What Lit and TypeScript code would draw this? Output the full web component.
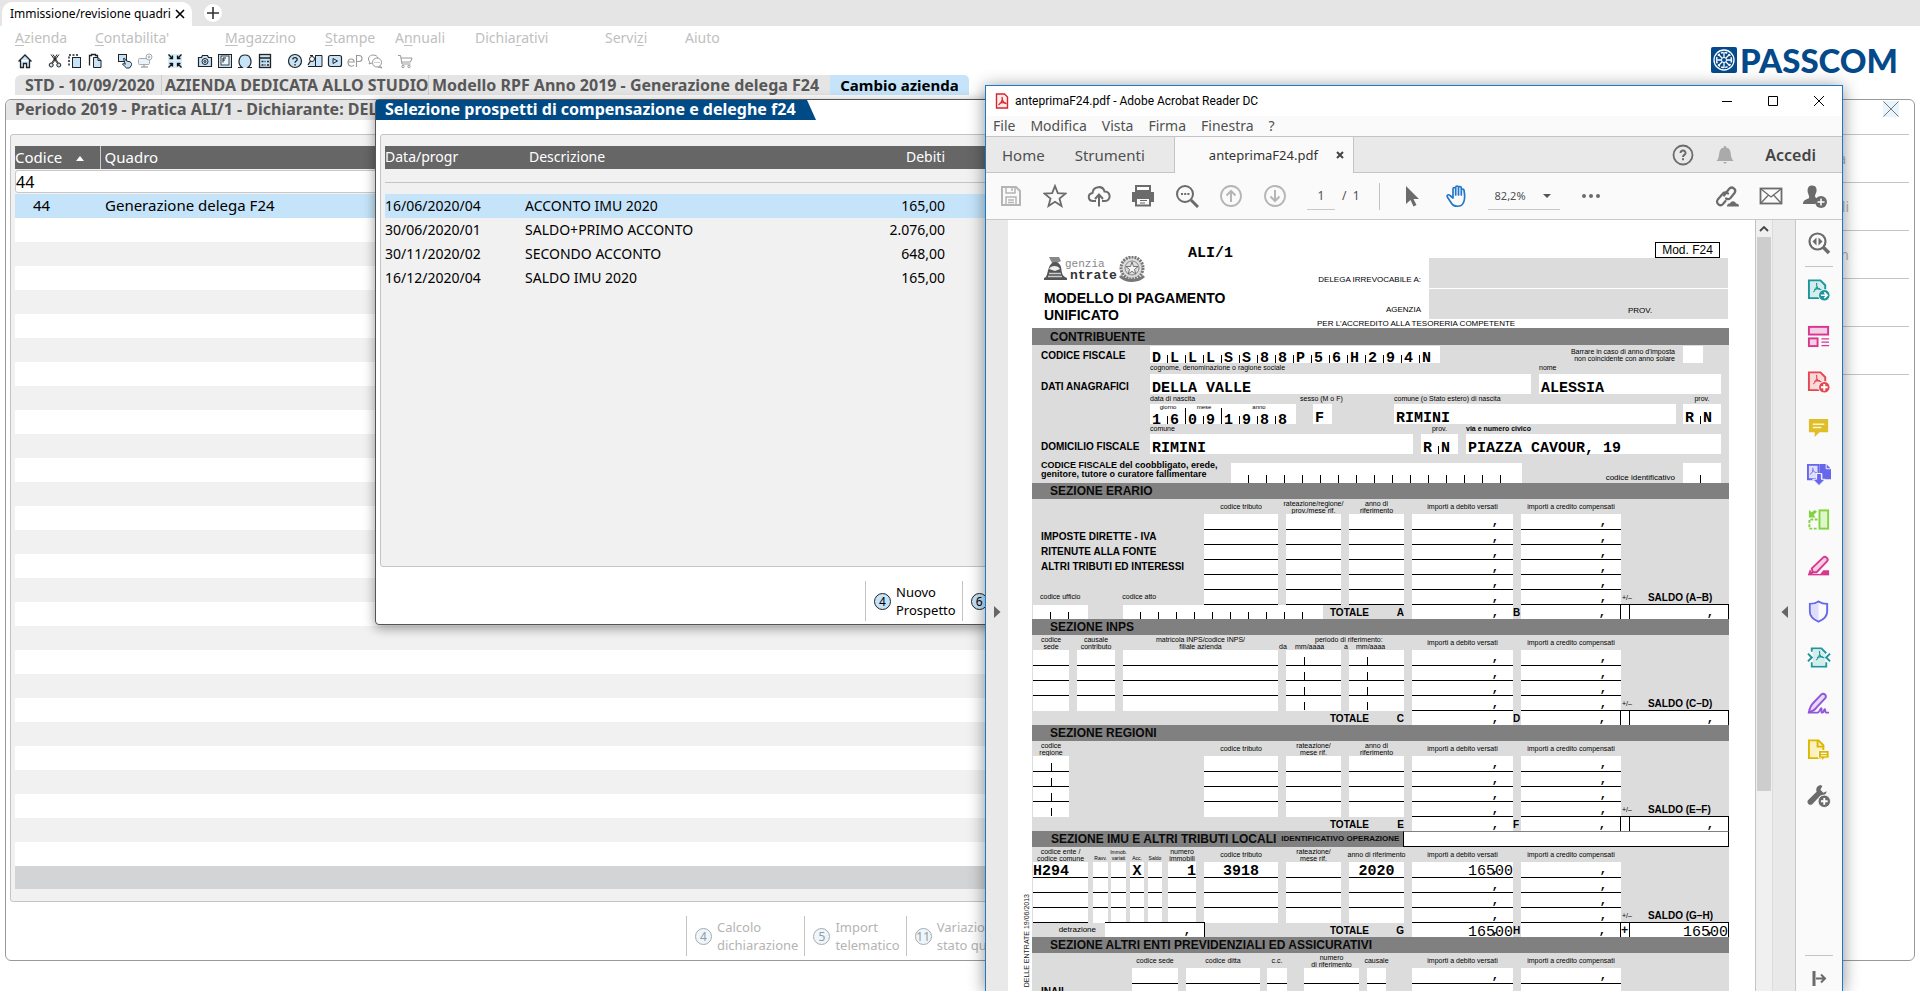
import { LitElement, html, css, svg, nothing, TemplateResult } from "lit";
import { customElement } from "lit/decorators.js";

const icon = (w: number, h: number, box: string, body: unknown) =>
  html`<svg width=${w} height=${h} viewBox=${box} fill="none" aria-hidden="true">${body}</svg>`;

const repeat = (n: number) => Array.from({ length: n }, (_, i) => i);

/* ---------- application toolbar icons, 16 x 16 ---------- */
const B = "#c5e4fa";
const appIcons: Record<string, unknown> = {
  home: svg`<path d="M1.500 8.500 8 2l6.500 6.500M3.500 7v7.500h3V10.500h3v4h3V7" stroke="#222" stroke-width="1.300" fill="${B}"/>`,
  cut: svg`<path d="M4 1.500l6.500 9M12 1.500l-6.500 9M6 1.500l5.500 9M10 1.500l-5.500 9" stroke="#222"/><circle cx="4.200" cy="12" r="2" stroke="#222" fill="${B}"/><circle cx="11.800" cy="12" r="2" stroke="#222" fill="${B}"/>`,
  copy: svg`<path d="M2 12.500V2h9" stroke="#222" stroke-width="1.500" stroke-dasharray="2 1.500"/><rect x="5.500" y="4.500" width="8" height="10" stroke="#222" fill="${B}"/>`,
  paste: svg`<path d="M2.500 12.500v-10h2v-1h4v1h2v2" stroke="#222" stroke-width="1.300"/><path d="M6.500 4.500h4.500l3 3v7H6.500z" stroke="#222" fill="${B}"/><path d="M11 4.500v3h3" stroke="#222"/>`,
  pick: svg`<rect x="1.500" y="1.500" width="8" height="7" stroke="#222" fill="${B}"/><path d="M6.500 5.500c1-.8 1.500.4 3 2.500l3.500.8c1.500.8 2 2.200 1.200 4l-1.700 2.200h-3c-1.500-1-2.500-2.500-4-4 .8-.8 1.500-.6 2.800.3z" stroke="#222" fill="${B}"/>`,
  screen: svg`<rect x="1.500" y="5.500" width="11" height="6" rx="1" stroke="#aaa" fill="#e8f3fb"/><path d="M4 14h7M7 12v2" stroke="#aaa" stroke-width="1.500"/><circle cx="12" cy="4" r="3" stroke="#aaa" fill="#fff"/><circle cx="12" cy="4" r="1" stroke="#aaa"/>`,
  shrink: svg`<rect x="1" y="1" width="14" height="14" fill="#d8edfb"/><path d="M1.500 1.500l4 4m0-3v3h-3M14.500 1.500l-4 4m0-3v3h3M1.500 14.500l4-4m0 3v-3h-3M14.500 14.500l-4-4m0 3v-3h3" stroke="#111" stroke-width="1.300"/>`,
  camera: svg`<path d="M1.500 4.500h3l1-2h5l1 2h3v9h-13z" stroke="#222" fill="${B}" stroke-width="1.200"/><circle cx="8" cy="8.500" r="3" stroke="#222"/><circle cx="8" cy="8.500" r="1" stroke="#222"/>`,
  floppy: svg`<rect x="1.500" y="1.500" width="13" height="13" stroke="#222" fill="${B}"/><rect x="4" y="3" width="8" height="9" fill="#eaf6fe" stroke="#222" stroke-width=".8"/><path d="M6 9.500V5h3M6 7h2" stroke="#222"/>`,
  omega: svg`<path d="M1 14.500h4C0 11 1.500 2 8 2s8 9 3 12.500h4" stroke="#222" fill="${B}" stroke-width="1.200"/>`,
  calc: svg`<rect x="2.500" y="1.500" width="11" height="13" stroke="#222" fill="${B}" stroke-width="1.300"/><path d="M2.500 5h11" stroke="#222" stroke-width="1.500"/><path d="M4.500 8.500h2m1 0h1m1.500 0h2M4.500 12h2m1 0h1m1.500 0h2" stroke="#222" stroke-width="1.600"/>`,
  help: svg`<circle cx="8" cy="8" r="6.500" stroke="#222" fill="${B}" stroke-width="1.200"/><path d="M5.800 6.500C5.800 3.800 10.200 4 10.200 6.500 10.200 8 8 8 8 9.800M8 11v1.500" stroke="#222" stroke-width="1.300"/>`,
  book: svg`<path d="M8.500 2.500H15v11H8.500zM1 13.500h7.500v-11M3 2.500h3" stroke="#222" fill="${B}"/><circle cx="5" cy="6" r="2.500" stroke="#222" fill="#fff"/><path d="M3.500 8 1 12" stroke="#222" stroke-width="1.400"/>`,
  video: svg`<rect x="1.500" y="2.500" width="13" height="11" rx="2" stroke="#222" fill="${B}" stroke-width="1.200"/><path d="M6 5.500v5L10.500 8z" stroke="#222"/>`,
  ep: svg`<path d="M.8 9h6.400C7.200 5 1 5 1 9.500c0 4 4.500 4.500 6 2.500M9.500 14V2.500H12c4 0 4 6 0 6H9.500" stroke="#999" stroke-width="1.100"/>`,
  chat: svg`<path d="M3 9C0 7 1.500 2 6 2c3 0 4.500 1.500 5 3" stroke="#999"/><path d="M3 9 2 11l3-1" stroke="#999"/><circle cx="10" cy="9.500" r="4.500" stroke="#999" fill="#fff"/><path d="M13 12.500l2 2.500-4-1M7.500 9.500h1m1 0h1m1 0h1" stroke="#999"/>`,
  cart: svg`<path d="M1 2.500h2.500L5 11h8.500M4 5h11l-1.500 4H5" stroke="#999" fill="none"/><circle cx="6" cy="13.500" r="1.200" stroke="#999"/><circle cx="12" cy="13.500" r="1.200" stroke="#999"/>`,
};
const toolGroups: [string, string][][] = [
  [["home", "Home"]],
  [["cut", "Taglia"], ["copy", "Copia"], ["paste", "Incolla"]],
  [["pick", "Seleziona"], ["screen", "Schermo"]],
  [["shrink", "Riduci"]],
  [["camera", "Cattura"], ["floppy", "Funzioni"], ["omega", "Simboli"], ["calc", "Calcolatrice"]],
  [["help", "Aiuto"], ["book", "Manuale"], ["video", "Video"], ["ep", "ePass"], ["chat", "Chat"]],
  [["cart", "Carrello"]],
];

/* ---------- reader icons, 24 x 24 ---------- */
const G = "#6b6b6b";
const L = "#b5b5b5";
const rd: Record<string, unknown> = {
  save: svg`<path d="M3 3h14l4 4v14H3z" stroke="${L}" stroke-width="2"/><path d="M7 3v6h9V3M7 21v-8h10v8M9 16h6M9 18.500h6M13 4v3" stroke="${L}" stroke-width="1.500"/>`,
  star: svg`<path d="M12 2l2.800 7.200 7.700.4-6 4.900 2 7.500L12 17.800 5.500 22l2-7.500-6-4.900 7.700-.4z" stroke="${G}" stroke-width="1.800"/>`,
  cloud: svg`<path d="M9 17H6C1 17 0 10 5.500 9 6 2 16 1 17.500 7.500 24 7 24.500 17 18 17h-3" stroke="${G}" stroke-width="2"/><path d="M12 22.500V11M8 15l4-4.500 4 4.500" stroke="${G}" stroke-width="2"/>`,
  print: svg`<path d="M5 2h14v5H5z" stroke="${G}" stroke-width="2"/><path d="M1 8h22v10h-3v-4H4v4H1z" fill="${G}"/><path d="M5 14h14v7.500H5z" stroke="${G}" stroke-width="2" fill="#fafafa"/><path d="M9 16.500h7M9 19h5" stroke="${G}" stroke-width="1.200"/>`,
  search: svg`<circle cx="10" cy="10" r="8" stroke="${G}" stroke-width="2"/><path d="M16 16l7 7" stroke="${G}" stroke-width="3"/><path d="M6 10h2m1.200 0h2m1.200 0h2" stroke="${G}" stroke-width="1.800"/>`,
  up: svg`<circle cx="12" cy="12" r="10" stroke="${L}" stroke-width="1.800"/><path d="M12 18V7M7.500 11.500 12 7l4.500 4.500" stroke="${L}" stroke-width="2"/>`,
  down: svg`<circle cx="12" cy="12" r="10" stroke="${L}" stroke-width="1.800"/><path d="M12 6v11M7.500 12.500 12 17l4.500-4.500" stroke="${L}" stroke-width="2"/>`,
  cursor: svg`<path d="M6 2v18l4.500-4 3 6.500 3-1.400-3-6.100H19z" fill="${G}"/>`,
  hand: svg`<path d="M7.500 14V5c0-2 2.700-2 2.700 0v6V3.500c0-2 2.800-2 2.800 0V11V4c0-2 2.800-2 2.800 0v7V6.500c0-2 2.700-2 2.700 0 1 5 1 9-.5 12-2 5-10 5-12.500 0L1.800 13c-.8-2 1.200-3 2.700-1.500z" transform="translate(1.500 0)" stroke="#2277cc" stroke-width="1.700" stroke-linejoin="round"/>`,
  dots: svg`<circle cx="5" cy="12" r="2" fill="${G}"/><circle cx="12" cy="12" r="2" fill="${G}"/><circle cx="19" cy="12" r="2" fill="${G}"/>`,
  link: svg`<g stroke="${G}" stroke-width="2.200" stroke-linecap="round"><path d="M9 11.500 14 5c3-3.500 8 .5 5.500 4l-4 5c-1.500 1.500-3 1.500-4.500.5"/><path d="M13 9.500c-1.500-1.500-4-1.500-5.500.5L2.800 15.500c-2.500 4 2.500 7.500 5.200 4.500l2.500-3"/></g><path d="M12 22.500c0-2.500 1.500-3 3-3 1-3 5-3 6 0 2 0 3 1 3 3z" fill="${G}"/>`,
  mail: svg`<rect x="1.500" y="4.500" width="21" height="15" stroke="${G}" stroke-width="1.800"/><path d="M2 5l10 8 10-8M2 19l7.500-8M22 19l-7.500-8" stroke="${G}" stroke-width="1.300"/>`,
  user: svg`<path d="M9 1.500c4 0 5 3 4.500 6-.4 2-1.500 3-1.500 4.500 0 2 2 2 3.500 3L12 20H0c0-5 5-4.500 6-6 .8-1.500-1-4-1.300-6C4.300 4 5.500 1.500 9 1.500z" fill="${G}"/><circle cx="18" cy="18" r="6" fill="${G}"/><path d="M14.500 18h7M18 14.500v7" stroke="#fff" stroke-width="1.500"/>`,
};

const acro = (x: number, c: string) => svg`<path d="M${x} 5c1 4-2 9-3.500 9.500M${x} 8c1 3 2 4.500 5 4M${x - 2.5} 12c2-1 4-1 6-1" stroke="${c}" stroke-width="1.200"/>`;
const docShape = (c: string, f: string) => svg`<path d="M2 2.500h12l5 5V21H2z" stroke="${c}" stroke-width="2" fill="${f}"/>${acro(10, c)}`;
const side: [string, unknown][] = [
  ["Esporta PDF", svg`${docShape("#1c959b", "#d3ecec")}<circle cx="18" cy="18" r="6" fill="#1c959b" stroke="#fafafa"/><path d="M14.500 18h6M18 15l3 3-3 3" stroke="#fff" stroke-width="1.600"/>`],
  ["Organizza pagine", svg`<rect x="2" y="3" width="20" height="8" stroke="#d83790" stroke-width="2" fill="#f5cfe4"/><rect x="2" y="15" width="9" height="8" stroke="#d83790" stroke-width="2" fill="#f5cfe4"/><path d="M15 15.500h8M15 19h8M15 22.500h8" stroke="#d83790" stroke-width="1.300"/>`],
  ["Crea PDF", svg`${docShape("#e34850", "#fbd9db")}<circle cx="18" cy="18" r="6" fill="#e34850" stroke="#fafafa"/><path d="M14.500 18h7M18 14.500v7" stroke="#fff" stroke-width="2"/>`],
  ["Commenta", svg`<path d="M2 3h20v14h-9l-5 5v-5H2z" fill="#dfbe27"/><path d="M6 8.500h12M6 12h9" stroke="#fff6d0" stroke-width="1.600"/>`],
  ["Combina file", svg`<path d="M1 3h11v15H1z" stroke="#6767ec" stroke-width="2" fill="#dedefb"/><path d="M13 2h7l5 5v11h-9v-6h-3z" fill="#6767ec"/><path d="M20 2v5h5" stroke="#fafafa"/><path d="M6 6c1 3-1 6-3 7M6 8c1 2 2 3 4 3" stroke="#6767ec"/><path d="M10 12h5v6h4l-6.500 6.500L6 18h4z" fill="#6767ec" stroke="#fafafa"/>`],
  ["Proteggi pagine", svg`<rect x="13" y="2.500" width="9" height="19" stroke="#83d341" stroke-width="2" fill="#dff5cc"/><path d="M11 12H2.500v9.500H11" stroke="#83d341" stroke-width="2" stroke-dasharray="3 1.500"/><path d="M2 2v8h7L7 7l3.500-3L8 2 5 4.500z" fill="#83d341"/>`],
  ["Redigi", svg`<path d="M5 15 17 3.500c2-2 6 1.500 4 4L10 19H6z" stroke="#d83790" stroke-width="2" fill="#f5cfe4"/><path d="M3 16 1 22h6zM13 22l4-5h6v5z" fill="#d83790"/><path d="M1 21.500h22" stroke="#d83790" stroke-width="1.500"/>`],
  ["Proteggi", svg`<path d="M12 1.500c3 2 6 2.500 9 2.500v8c0 5-4 8.500-9 10.500C7 20.500 3 17 3 12V4c3 0 6-.5 9-2.500z" stroke="#6767ec" stroke-width="2"/><path d="M12 3v18c-4-2-8-5-8-9V5c3 0 5-.5 8-2z" fill="#dedefb"/>`],
  ["Ottimizza PDF", svg`<path d="M5 6V2.500h10l5 5M20 17v4.500H5V17" stroke="#1c959b" stroke-width="2"/><path d="M6 4h8l5 5v11H6z" fill="#d3ecec"/>${acro(13, "#1c959b")}<path d="M1 8l4 4-4 4M24 8l-4 4 4 4" stroke="#1c959b" stroke-width="2"/>`],
  ["Compila e firma", svg`<path d="M2 21c1-5 2-7 4-9L15 2.500c2.500-2 6 1 4 4L10 16c-2 3-4 4-8 5z" stroke="#9256d9" stroke-width="2" fill="#e7d9f8"/><path d="M1 21.500h10c2 0 3-5 4-4.500s-1 5 1 4.500 1.500-3.500 2.500-3.500 0 3.500 1.500 3.500h3" stroke="#9256d9" stroke-width="2"/>`],
  ["Invia per commenti", svg`<path d="M2 2.500h10l5 5V21H2z" stroke="#dbb800" stroke-width="2" fill="#faf0c0"/><path d="M11 2v7h7" stroke="#dbb800" stroke-width="2"/><path d="M12 13h11v8h-5l-3 3v-3h-3z" fill="#dbb800" stroke="#fafafa"/><path d="M14.500 16h6M14.500 18.500h6" stroke="#fff" stroke-width="1.200"/>`],
  ["Altri strumenti", svg`<path d="M14 1c-4 1-5 4-4 7L1 17c-2 3 2 6 4.500 4L14 12c3 1 6-1 6.500-4.500L17 9l-3-3 2-4z" fill="${G}"/><circle cx="18" cy="18" r="6.500" fill="${G}" stroke="#fafafa"/><path d="M14.500 18h7M18 14.500v7" stroke="#fff" stroke-width="2"/>`],
];

/* ---------- data ---------- */
const deleghe = [
  ["16/06/2020/04", "ACCONTO IMU 2020", "165,00"],
  ["30/06/2020/01", "SALDO+PRIMO ACCONTO", "2.076,00"],
  ["30/11/2020/02", "SECONDO ACCONTO", "648,00"],
  ["16/12/2020/04", "SALDO IMU 2020", "165,00"],
];

/* ============================ F24 form ============================ */
@customElement("f24-form")
export class F24Form extends LitElement {
  static styles = css`
    :host { display: block; width: 697px; color: #000; font: 8px/9px "Liberation Sans", Arial, sans-serif; }
    * { box-sizing: border-box; }
    h1, h2, p { margin: 0; }
    .head { display: flex; height: 99px; padding: 0 1px 0 12px; }
    .brand { flex: 1; white-space: nowrap; }
    .brand-top { display: flex; height: 63px; align-items: flex-end; gap: 43px; }
    .brand-top svg { flex: none; }
    .ref { align-self: flex-end; margin-bottom: 19px; }
    .mono { font: bold 15px/20px "Liberation Mono", "Courier New", monospace; white-space: pre; }
    h1 { font-size: 14px; line-height: 17px; margin-top: 7px; }
    .agencies { width: 120px; padding: 55px 8px 0 0; text-align: right; display: flex; flex-direction: column; gap: 21px; white-space: nowrap; }
    .shade { width: 299px; padding-top: 22px; display: flex; flex-direction: column; }
    .mod { align-self: flex-end; margin: 0 8px 0 0; width: 65px; height: 16px; border: 1px solid #000; background: #fff; font-size: 12px; line-height: 14px; text-align: center; }
    .shade i { display: block; height: 30px; background: #dcdcdc; margin-bottom: 1px; font-style: normal; flex: none; padding: 17px 0 0 199px; }
    .credit { height: 9px; padding-left: 285px; white-space: nowrap; }
    h2 { height: 16px; background: #808080; padding-left: 18px; font-size: 12px; line-height: 16px; color: #0a0a0a; white-space: nowrap; }
    .tall { height: 17px; line-height: 18px; }
    .body { background: #dcdcdc; }
    .payer { padding: 1px 8px 0 9px; height: 138px; font-size: 7px; line-height: 10px; }
    .payer b.l { font-size: 10px; line-height: 25px; }
    .r1 { display: flex; height: 17px; }
    .payer .r1 b.l { width: 109px; line-height: 20px; }
    .comb { display: flex; background: #fff; }
    .comb span { width: 18px; padding-left: 2px; background: linear-gradient(#000, #000) right bottom / 1px 8px no-repeat; font: bold 15px/25px "Liberation Mono", monospace; height: 100%; flex: none; }
    .comb span:last-child { background: none; }
    .comb span.full { background-size: 1px 100%; }
    .boxed span { line-height: 30px; }
    .cf { width: 290px; }
    .note { margin-left: auto; width: 110px; text-align: right; line-height: 7px; padding-top: 2px; white-space: nowrap; }
    .tick { width: 20px; margin: 0 18px 0 8px; background: #fff; }
    .r2, .r3, .r4 { display: grid; grid-template-rows: 10px 20px; }
    .r2 { grid-template-columns: 109px 381px 8px 182px; grid-template-rows: 11px 20px; }
    .r3 { grid-template-columns: 109px 146px 4px 13px 19px 62px 282px 7px 38px; }
    .r4 { grid-template-columns: 109px 263px 8px 37px 8px 255px; }
    .l { grid-row: 2; grid-column: 1; white-space: nowrap; }
    .cap { grid-row: 1; white-space: nowrap; }
    .val { grid-row: 2; background: #fff; padding-left: 2px; line-height: 30px; }
    .boxed { grid-row: 2; }
    .k2 { grid-column: 2; } .k4 { grid-column: 4; } .k5 { grid-column: 5; } .k6 { grid-column: 6; } .k7 { grid-column: 7; } .k9 { grid-column: 9; }
    .sx { grid-column: 4 / 7; }
    .mid { text-align: center; }
    .date { grid-row: 2; grid-column: 2; background: #fff; display: grid; grid-template-columns: 36px 36px 1fr; grid-template-rows: 4px 16px; font-size: 6px; line-height: 6px; text-align: center; }
    .date .comb { grid-column: 1 / 4; background: none; text-align: left; }
    .date .comb span { line-height: 25px; }
    .r5 { display: flex; height: 29px; padding-top: 9px; }
    .r5 b { width: 190px; font-size: 9px; line-height: 9px; margin-top: -2px; white-space: nowrap; }
    .r5 .ident { margin-left: auto; font-size: 8px; line-height: 30px; padding-right: 8px; }
    .c16 { width: 291px; } .c2 { width: 38px; }

    .sec { display: grid; grid-template-columns: 1px 36px 8px 38px 8px 81px 74px 8px 55px 8px 55px 8px 101px 8px 100px 9px 1fr; grid-template-rows: 15px auto 14px; }
    .h { grid-row: 1; align-self: center; justify-self: center; text-align: center; font-size: 7px; line-height: 7px; white-space: nowrap; }
    .stack { grid-row: 2; display: flex; flex-direction: column; }
    .cell { height: 15px; background: #fff; border-bottom: 1px solid #000; display: grid; font: bold 12px/18px "Liberation Mono", monospace; }
    .cell:first-child { height: 16px; }
    .open .cell:last-child { border-bottom-color: #fff; }
    .cell > * { grid-area: 1 / 1; }
    .comma { justify-self: end; padding-right: 14px; line-height: 16px; }
    .num { justify-self: end; line-height: 19px; font-weight: normal; }
    .v { line-height: 19px; justify-self: center; }
    .v.start { justify-self: start; } .v.end { justify-self: end; }
    .notch .cell { background: linear-gradient(#000, #000) 18px bottom / 1px 8px no-repeat #fff; }
    .a { grid-column: 2; } .b { grid-column: 4; } .c { grid-column: 6 / 8; } .d { grid-column: 7; } .e { grid-column: 9; } .f { grid-column: 11; } .g { grid-column: 13; } .i { grid-column: 15; } .j { grid-column: 17; }
    .tword { grid-row: 3; grid-column: 8 / 12; justify-self: end; margin-right: 35px; font: bold 10px/15px "Liberation Sans", sans-serif; }
    .tletter { grid-row: 3; grid-column: 11; justify-self: end; font: bold 10px/15px "Liberation Sans", sans-serif; }
    .tb { grid-row: 3; grid-column: 14; font: bold 10px/15px "Liberation Sans", sans-serif; }
    .sum { grid-row: 3; background: #fff; display: grid; font: bold 12px/16px "Liberation Mono", monospace; }
    .sum > * { grid-area: 1 / 1; }
    .sum.g, .sum.i { box-shadow: 0 -1px #000; }
    .sum.i { border-right: 1px solid #000; }
    .sign { grid-row: 3; grid-column: 16; background: #fff; border-right: 1px solid #000; font: bold 12px/16px "Liberation Mono", monospace; box-shadow: 0 -1px #000; }
    .sum.j { border-right: 1px solid #000; box-shadow: 0 -1px #000; }
    .saldo { grid-row: 2; grid-column: 16 / 18; align-self: end; display: flex; gap: 16px; font-size: 7px; line-height: 14px; padding-left: 1px; }
    .saldo b { font-size: 10px; white-space: nowrap; }
    .names { grid-row: 2; grid-column: 2 / 7; padding: 15px 0 0 8px; font: bold 10px/15px "Liberation Sans", sans-serif; white-space: nowrap; }
    .codes { grid-row: 2; grid-column: 2 / 7; align-self: end; display: flex; gap: 42px; padding: 0 0 4px 7px; line-height: 9px; font-size: 7px; }
    .tail { grid-row: 3; grid-column: 2 / 10; display: flex; gap: 35px; }
    .tail .comb span { background-size: 1px 7px; }
    .u3 { width: 55px; } .u11 { width: 200px; }
    .period { grid-column: 8 / 12; justify-self: start; text-align: left; padding-left: 1px; }
    .period span { display: block; padding-left: 36px; }
    .period i { font-style: normal; }
    .period div { display: grid; grid-template-columns: 16px 49px 12px 1fr; }
    .imu { grid-row: 1 / 3; grid-column: 2 / 7; display: grid; grid-template-rows: 15px auto; grid-template-columns: 55px 5px 15px 3px 15px 4px 14px 4px 14px 6px 28px; }
    .tiny { font-size: 5px; line-height: 6px; align-self: end; padding-bottom: 1px; }
    .k1 { grid-column: 1; } .k3 { grid-column: 3; } .k11 { grid-column: 11; }
    .det { grid-row: 3; grid-column: 2 / 8; display: flex; font-size: 8px; line-height: 14px; }
    .det span { width: 72px; text-align: right; padding-right: 9px; }
    .det div { width: 100px; background: #fff; border-right: 1px solid #000; box-shadow: 0 -1px #000; text-align: right; padding-right: 13px; font: bold 12px/16px "Liberation Mono", monospace; }
    .opbar { display: flex; align-items: center; padding-left: 19px; }
    .opbar small { font-size: 8px; margin-left: 5px; }
    .opbar em { width: 326px; margin-left: auto; align-self: stretch; background: #fff; border: 1px solid #000; border-top-color: #808080; }
    .inail { grid-row: 1 / 3; grid-column: 2 / 12; display: grid; grid-template-rows: 15px auto; grid-template-columns: 99px 46px 8px 74px 7px 20px 17px 55px 8px 19px; }
    .k8 { grid-column: 8; } .k10 { grid-column: 10; }
    .inail b { grid-row: 2; grid-column: 1; font: bold 10px/12px "Liberation Sans", sans-serif; padding: 18px 0 0 8px; }
  `;

  private cells(n: number, col: string, opts: { comma?: boolean; first?: unknown; open?: boolean; notch?: boolean } = {}) {
    return html`<div class="stack ${col} ${opts.open ? "open" : ""} ${opts.notch ? "notch" : ""}">
      ${repeat(n).map((i) => html`<div class="cell">${opts.comma ? html`<span class="comma">,</span>` : nothing}${i === 0 && opts.first ? opts.first : nothing}</div>`)}
    </div>`;
  }

  private comb(text: string, n: number, cls = "") {
    return html`<div class="comb ${cls}">${repeat(n).map((i) => html`<span>${text[i] ?? ""}</span>`)}</div>`;
  }

  private amounts(n: number, debit?: string) {
    const m = debit ? html`<span class="mono num">${debit}</span>` : nothing;
    return html`
      <span class="h g">importi a debito versati</span><span class="h i">importi a credito compensati</span>
      ${this.cells(n, "g", { comma: true, first: m })}${this.cells(n, "i", { comma: true })}`;
  }

  private totals(a: string, b: string, value?: string) {
    const m = value ? html`<span class="mono num">${value}</span>` : nothing;
    return html`
      <span class="tword">TOTALE</span><span class="tletter">${a}</span>
      <div class="sum g"><span class="comma">,</span>${m}</div>
      <span class="tb">${b}</span>
      <div class="sum i"><span class="comma">,</span></div>
      <div class="sign">${value ? "+" : ""}</div>
      <div class="sum j"><span class="comma">,</span>${m}</div>
      <div class="saldo"><span>+/–</span><b>SALDO (${a}–${b})</b></div>`;
  }

  render() {
    return html`
      <div class="head">
        <div class="brand">
          <div class="brand-top">
            <svg width="101" height="27" viewBox="0 0 101 27" role="img" aria-label="Agenzia Entrate">
              <path d="M5 1h10l2 4-4 2H8z" fill="#888" />
              <path d="M0 22c4 0 3-10 7-14s9-1 10 3 0 9 6 11v2H0z" fill="#555" />
              <path d="M5 13c2-4 9-4 11 0l-5 2z" fill="#eee" />
              <path d="M5 17.500h12M4 20.500h14" stroke="#ccc" stroke-width="1.500" />
              <text x="21" y="11" font-family="Liberation Mono" font-size="11" fill="#888">genzia</text>
              <text x="26" y="23" font-family="Liberation Mono" font-size="13" font-weight="bold" fill="#333">ntrate</text>
              <circle cx="88" cy="12" r="11" fill="#ddd" stroke="#777" stroke-width="3" stroke-dasharray="2 1" />
              <circle cx="88" cy="12" r="7" fill="none" stroke="#888" />
              <path d="M88 6l1.500 4.500H94l-3.500 3 1.300 4.500-3.800-2.700-3.800 2.700 1.300-4.500-3.500-3h4.500z" fill="#f4f4f4" stroke="#555" stroke-width=".8" />
              <path d="M76 20c6 6 18 6 24 0" fill="none" stroke="#777" stroke-width="3" />
            </svg>
            <span class="mono ref">ALI/1</span>
          </div>
          <h1>MODELLO DI PAGAMENTO<br />UNIFICATO</h1>
        </div>
        <div class="agencies"><span>DELEGA IRREVOCABILE A:</span><span>AGENZIA</span></div>
        <div class="shade"><span class="mod">Mod. F24</span><i></i><i>PROV.</i></div>
      </div>
      <p class="credit">PER L'ACCREDITO ALLA TESORERIA COMPETENTE</p>

      <h2 class="tall">CONTRIBUENTE</h2>
      <div class="body payer">
        <div class="r1">
          <b class="l">CODICE FISCALE</b>${this.comb("DLLLSS88P56H294N", 16, "cf")}
          <span class="note">Barrare in caso di anno d'imposta<br />non coincidente con anno solare</span><i class="tick"></i>
        </div>
        <div class="r2">
          <b class="l">DATI ANAGRAFICI</b>
          <span class="cap k2">cognome, denominazione o ragione sociale</span><span class="cap k4">nome</span>
          <span class="val mono k2">DELLA VALLE</span><span class="val mono k4">ALESSIA</span>
        </div>
        <div class="r3">
          <span class="cap k2">data di nascita</span><span class="cap sx">sesso (M o F)</span>
          <span class="cap k7">comune (o Stato estero) di nascita</span><span class="cap k9 mid">prov.</span>
          <div class="date">
            <span>giorno</span><span>mese</span><span>anno</span>
            <div class="comb">${"16091988".split("").map((c, i) => html`<span class=${i === 1 || i === 3 ? "full" : ""}>${c}</span>`)}</div>
          </div>
          <span class="val mono k5">F</span><span class="val mono k7">RIMINI</span>${this.comb("RN", 2, "boxed k9")}
        </div>
        <div class="r4">
          <b class="l">DOMICILIO FISCALE</b>
          <span class="cap k2">comune</span><span class="cap k4 mid">prov.</span><b class="cap k6">via e numero civico</b>
          <span class="val mono k2">RIMINI</span>${this.comb("RN", 2, "boxed k4")}<span class="val mono k6">PIAZZA CAVOUR, 19</span>
        </div>
        <div class="r5">
          <b>CODICE FISCALE del coobbligato, erede,<br />genitore, tutore o curatore fallimentare</b>
          ${this.comb("", 16, "c16")}<span class="ident">codice identificativo</span>${this.comb("", 2, "c2")}
        </div>
      </div>

      <h2>SEZIONE ERARIO</h2>
      <div class="body sec">
        <span class="h d">codice tributo</span><span class="h e">rateazione/regione/<br />prov./mese rif.</span><span class="h f">anno di<br />riferimento</span>
        <div class="names">IMPOSTE DIRETTE - IVA<br />RITENUTE ALLA FONTE<br />ALTRI TRIBUTI ED INTERESSI</div>
        <div class="codes"><span>codice ufficio</span><span>codice atto</span></div>
        ${this.cells(6, "d")}${this.cells(6, "e")}${this.cells(6, "f")}${this.amounts(6)}
        <div class="tail">${this.comb("", 3, "u3")}${this.comb("", 11, "u11")}</div>
        ${this.totals("A", "B")}
      </div>

      <h2>SEZIONE INPS</h2>
      <div class="body sec">
        <span class="h a">codice<br />sede</span><span class="h b">causale<br />contributo</span>
        <span class="h c">matricola INPS/codice INPS/<br />filiale azienda</span>
        <div class="h period"><span>periodo di riferimento:</span><div><i>da</i><i>mm/aaaa</i><i>a</i><i>mm/aaaa</i></div></div>
        ${this.cells(4, "a", { open: true })}${this.cells(4, "b", { open: true })}${this.cells(4, "c", { open: true })}
        ${this.cells(4, "e", { open: true, notch: true })}${this.cells(4, "f", { open: true, notch: true })}${this.amounts(4)}
        ${this.totals("C", "D")}
      </div>

      <h2>SEZIONE REGIONI</h2>
      <div class="body sec">
        <span class="h a">codice<br />regione</span><span class="h d">codice tributo</span>
        <span class="h e">rateazione/<br />mese rif.</span><span class="h f">anno di<br />riferimento</span>
        ${this.cells(4, "a", { open: true, notch: true })}${this.cells(4, "d", { open: true })}${this.cells(4, "e", { open: true })}${this.cells(4, "f", { open: true })}
        ${this.amounts(4)}${this.totals("E", "F")}
      </div>

      <h2 class="opbar">SEZIONE IMU E ALTRI TRIBUTI LOCALI<small>IDENTIFICATIVO OPERAZIONE</small><em></em></h2>
      <div class="body sec">
        <div class="imu">
          <span class="h k1">codice ente /<br />codice comune</span><span class="h k3 tiny">Ravv.</span><span class="h k5 tiny">Immob.<br />variati</span>
          <span class="h k7 tiny">Acc.</span><span class="h k9 tiny">Saldo</span><span class="h k11">numero<br />immobili</span>
          ${this.cells(4, "k1", { first: html`<span class="mono v start">H294</span>` })}
          ${this.cells(4, "k3", { open: true })}${this.cells(4, "k5", { open: true })}
          ${this.cells(4, "k7", { open: true, first: html`<span class="mono v">X</span>` })}
          ${this.cells(4, "k9", { open: true })}
          ${this.cells(4, "k11", { open: true, first: html`<span class="mono v end">1</span>` })}
        </div>
        <span class="h d">codice tributo</span><span class="h e">rateazione/<br />mese rif.</span><span class="h f">anno di riferimento</span>
        ${this.cells(4, "d", { open: true, first: html`<span class="mono v">3918</span>` })}${this.cells(4, "e", { open: true })}
        ${this.cells(4, "f", { open: true, first: html`<span class="mono v">2020</span>` })}
        ${this.amounts(4, "16500")}
        <div class="det"><span>detrazione</span><div>,</div></div>
        ${this.totals("G", "H", "16500")}
      </div>

      <h2>SEZIONE ALTRI ENTI PREVIDENZIALI ED ASSICURATIVI</h2>
      <div class="body sec">
        <div class="inail">
          <span class="h k2">codice sede</span><span class="h k4">codice ditta</span><span class="h k6">c.c.</span>
          <span class="h k8">numero<br />di riferimento</span><span class="h k10">causale</span>
          <b>INAIL</b>
          ${this.cells(3, "k2")}${this.cells(3, "k4")}${this.cells(3, "k6")}${this.cells(3, "k8")}${this.cells(3, "k10")}
        </div>
        ${this.amounts(3)}
      </div>
    `;
  }
}

/* ======================= PDF reader window ======================= */
@customElement("pdf-reader")
export class PdfReader extends LitElement {
  static styles = css`
    :host { display: flex; flex-direction: column; box-sizing: border-box; border: 1px solid #1979ca; border-bottom: 0; background: #fafafa; box-shadow: 0 2px 16px rgba(0, 0, 0, 0.45); overflow: hidden; font: 14px/20px "Noto Sans", "Open Sans", sans-serif; color: #505050; }
    * { box-sizing: border-box; }
    button { border: 0; background: none; padding: 0; font: inherit; color: inherit; display: flex; align-items: center; justify-content: center; }
    .title { height: 30px; flex: none; display: flex; align-items: center; background: #fff; padding-left: 9px; color: #000; font: 12px/16px Roboto, "Open Sans", sans-serif; }
    .title svg { flex: none; }
    .title h1 { margin: 0 auto 0 6px; font: inherit; }
    .title button { width: 46px; height: 30px; }
    .menu { height: 21px; flex: none; display: flex; gap: 15px; padding-left: 7px; border-bottom: 1px solid #c4c4c4; }
    .tabs { height: 36px; flex: none; display: flex; background: #e9e9e9; border-bottom: 1px solid #c4c4c4; font-size: 15px; align-items: stretch; }
    .tabs .home { padding: 0 16px; }
    .tabs .tools { padding: 0 29px 0 14px; }
    .tabs .open { margin-bottom: -1px; height: 36px; width: 180px; background: #fafafa; border: solid #c4c4c4; border-width: 0 1px; font-size: 13px; color: #333; padding: 0 7px 0 34px; display: flex; align-items: center; justify-content: space-between; }
    .open button { width: 12px; }
    .grow { flex: 1; }
    .tabs .ic { width: 42px; }
    .tabs .sign { font-weight: 600; font-size: 16px; color: #444; padding: 0 26px 0 19px; }
    .bar { height: 47px; flex: none; display: flex; align-items: center; padding: 0 5px 0 3px; border-bottom: 1px solid #c8c8c8; }
    .bar button { width: 44px; height: 44px; flex: none; }
    .page-no { width: 28px; margin-left: 10px; border: 0; border-bottom: 1px solid #c8c8c8; background: none; height: 27px; padding: 0; text-align: center; font: 12px "Noto Sans", sans-serif; color: #505050; border-radius: 0; }
    .of { font-size: 12px; margin: 0 19px 0 7px; white-space: nowrap; }
    .rule { width: 1px; height: 27px; background: #c4c4c4; margin-right: 10px; }
    .zoom { display: flex; align-items: center; width: 72px; height: 27px; border-bottom: 1px solid #c8c8c8; margin: 0 9px 0 10px; }
    .zoom select { appearance: none; border: 0; background: none; font: 11px "Noto Sans", sans-serif; color: #505050; padding: 0; margin-left: 7px; width: 48px; }
    .view { flex: 1; min-height: 0; display: flex; }
    .rail { width: 22px; flex: none; background: #e9e9e9; display: flex; align-items: center; justify-content: center; height: 784px; }
    .page { flex: 1; min-width: 0; background: #fff; display: flex; overflow: hidden; align-items: flex-start; }
    .edge { writing-mode: vertical-rl; transform: rotate(180deg); width: 24px; padding-right: 15px; margin-top: 674px; font: 7px/8px "Liberation Sans", sans-serif; color: #222; white-space: nowrap; }
    .scroll { width: 18px; flex: none; border-left: 1px solid #c4c4c4; border-right: 1px solid #dcdcdc; background: #f0f0f0; display: flex; flex-direction: column; padding: 0 1px; }
    .scroll button { height: 17px; }
    .thumb { height: 554px; background: #cdcdcd; }
    .strip { border-right: 1px solid #c8c8c8; }
    .dock { width: 46px; flex: none; display: flex; flex-direction: column; align-items: center; padding-bottom: 1px; }
    .dock button { width: 46px; height: 46px; flex: none; }
    .dock hr { width: 28px; border: 0; border-top: 1px solid #c4c4c4; margin: 0; flex: none; }
    .dock .last { height: 34px; padding-top: 14px; }
    .full { background: #e9e9e9; display: flex; }
  `;

  private tool(name: string, label: string) {
    return html`<button aria-label=${label}>${icon(24, 24, "0 0 24 24", rd[name])}</button>`;
  }

  render(): TemplateResult {
    return html`
      <div class="title">
        ${icon(14, 16, "0 0 14 16", svg`<path d="M1.500 1h8l3 3v11h-11z" stroke="#d9232a" stroke-width="1.400" fill="#fdeeee"/><path d="M7 4c1 3-1 6-3.500 8M7 6c1 3 2 4.500 4.500 4.500M4.500 10.500c2-1 4-1 6-.5" stroke="#d9232a" stroke-width="1.300"/>`)}
        <h1>anteprimaF24.pdf - Adobe Acrobat Reader DC</h1>
        <button aria-label="Riduci a icona">${icon(12, 12, "0 0 12 12", svg`<path d="M1 6.500h10" stroke="#000"/>`)}</button>
        <button aria-label="Ingrandisci">${icon(12, 12, "0 0 12 12", svg`<path d="M1.500 1.500h9v9h-9z" stroke="#000"/>`)}</button>
        <button aria-label="Chiudi">${icon(12, 12, "0 0 12 12", svg`<path d="M1 1l10 10M11 1 1 11" stroke="#000"/>`)}</button>
      </div>
      <nav class="menu">${["File", "Modifica", "Vista", "Firma", "Finestra", "?"].map((t) => html`<button>${t}</button>`)}</nav>
      <div class="tabs">
        <button class="home">Home</button><button class="tools">Strumenti</button>
        <div class="open"><span>anteprimaF24.pdf</span><button aria-label="Chiudi scheda">${icon(8, 8, "0 0 8 8", svg`<path d="M1 1l6 6M7 1 1 7" stroke="#444" stroke-width="2"/>`)}</button></div>
        <span class="grow"></span>
        <button class="ic" aria-label="Guida">${icon(22, 22, "0 0 22 22", svg`<circle cx="11" cy="11" r="9.500" stroke="${G}" stroke-width="1.800"/><path d="M8.500 9c0-3.500 5.500-3 5 .3-.3 1.700-2.500 1.500-2.500 3.700M11 14.300v2" stroke="${G}" stroke-width="2"/>`)}</button>
        <button class="ic" aria-label="Notifiche">${icon(20, 20, "0 0 20 20", svg`<path d="M9 1h2v1.500c6 1 4 7 6 11.500l1.500 2h-17L3 14C5 9.500 3 3.500 9 2.500zM8 17h4l-2 2z" fill="#aaa"/>`)}</button>
        <button class="sign">Accedi</button>
      </div>
      <div class="bar">
        ${this.tool("save", "Salva")}${this.tool("star", "Preferiti")}${this.tool("cloud", "Carica")}${this.tool("print", "Stampa")}${this.tool("search", "Trova")}${this.tool("up", "Pagina precedente")}${this.tool("down", "Pagina successiva")}
        <input class="page-no" aria-label="Pagina" value="1" /><span class="of">/&nbsp; 1</span><span class="rule"></span>
        ${this.tool("cursor", "Selezione")}${this.tool("hand", "Mano")}
        <label class="zoom"><select aria-label="Zoom"><option>82,2%</option></select>${icon(8, 6, "0 0 8 6", svg`<path d="M0 1h8L4 5z" fill="#555"/>`)}</label>
        ${this.tool("dots", "Altro")}
        <span class="grow"></span>
        ${this.tool("link", "Condividi collegamento")}${this.tool("mail", "Posta")}${this.tool("user", "Condividi")}
      </div>
      <div class="view">
        <div class="full"><button class="rail" aria-label="Apri riquadro">${icon(7, 12, "0 0 7 12", svg`<path d="M0 0v12l6.500-6z" fill="#666"/>`)}</button></div>
        <div class="page"><span class="edge">DELLE ENTRATE 19/06/2013</span><f24-form></f24-form></div>
        <div class="scroll"><button aria-label="Su">${icon(10, 6, "0 0 10 6", svg`<path d="M1 5l4-4 4 4" stroke="#444" stroke-width="1.800"/>`)}</button><div class="thumb"></div></div>
        <div class="full strip"><button class="rail" aria-label="Chiudi riquadro">${icon(7, 12, "0 0 7 12", svg`<path d="M7 0v12L.5 6z" fill="#666"/>`)}</button></div>
        <div class="dock">
          <button aria-label="Cerca strumenti">${icon(24, 24, "0 0 24 24", svg`<circle cx="10.500" cy="10.500" r="8" stroke="${G}" stroke-width="2.200"/><path d="M16 16l6 6" stroke="${G}" stroke-width="3.500"/><path d="M9.500 6.500v8L5.500 10.500zM11.500 6.500v8l4-4z" fill="${G}"/>`)}</button>
          <hr />
          ${side.map(([label, body]) => html`<button aria-label=${label}>${icon(24, 24, "0 0 25 25", body)}</button>`)}
          <span class="grow"></span>
          <hr />
          <button class="last" aria-label="Nascondi">${icon(20, 20, "0 0 20 20", svg`<path d="M5 1v15" stroke="${G}" stroke-width="3"/><path d="M7 8.500h9M12 4.500l4 4-4 4" stroke="${G}" stroke-width="2"/>`)}</button>
        </div>
      </div>
    `;
  }
}

/* ========================= main application ========================= */
@customElement("app-root")
export class AppRoot extends LitElement {
  static styles = css`
    :host { display: flex; flex-direction: column; position: relative; height: 100vh; overflow: hidden; background: #fff; font: 14px/20px "Noto Sans", "Open Sans", sans-serif; color: #000; }
    * { box-sizing: border-box; }
    button, input { font: inherit; color: inherit; }
    button { border: 0; background: none; padding: 0; }
    .tabs { height: 26px; background: #e5e5e5; display: flex; flex: none; padding-left: 2px; }
    .tab { margin-top: 2px; height: 24px; width: 190px; background: #fff; border-radius: 10px 10px 0 0; display: flex; align-items: center; justify-content: space-between; padding: 0 7px 0 8px; font: 12px/24px "Noto Sans", sans-serif; white-space: nowrap; }
    .tab button, .plus { display: flex; }
    .plus { margin: 4px 0 0 12px; width: 18px; height: 18px; border-radius: 50%; background: #fff; align-items: center; justify-content: center; }
    .menu { display: grid; grid-template-columns: 80px 130px 100px 70px 80px 130px 80px 80px; padding: 2px 0 0 15px; height: 24px; flex: none; color: #c0c0c0; align-items: start; }
    .menu button { text-align: left; }
    .tools { display: flex; gap: 10px; padding-left: 15px; height: 25px; flex: none; }
    .tools div { display: flex; }
    .tools button { width: 20px; height: 22px; display: flex; align-items: center; justify-content: center; }
    .crumbs { display: flex; height: 20px; margin-left: 15px; flex: none; font-weight: bold; font-size: 16px; line-height: 20px; color: #585858; }
    .crumbs span { background: #e5e5e5; padding: 0 3px; border-right: 1px solid #ccc; white-space: nowrap; }
    .crumbs .c1 { padding-left: 10px; width: 147px; border-radius: 6px 0 0 0; }
    .crumbs .c2 { width: 267px; }
    .crumbs .c3 { width: 401px; border: 0; }
    .crumbs button { width: 139px; background: #c5e4fa; color: #000; border-radius: 0 5px 0 0; font-size: 15px; }
    .win { flex: none; margin: 4px 5px 0; border: 1px solid #999; border-radius: 6px; height: 862px; display: flex; flex-direction: column; }
    .win-head { display: flex; height: 34px; flex: none; }
    .win-head h2 { margin: 0; height: 20px; width: 900px; background: #e5e5e5; border-radius: 6px 0 0 0; padding-left: 9px; font-size: 16px; line-height: 19px; color: #585858; }
    .close { margin: 1px 15px 0 auto; width: 16px; height: 16px; display: flex; background: #e9f5fd; }
    .cols { display: flex; }
    .panel { border: 1px solid #c4c4c4; border-radius: 3px; background: #f1f1f1; padding: 11px 0 12px 4px; }
    .main { flex: 1; margin-left: 4px; }
    .side { width: 200px; margin-right: 5px; }
    .side button { display: block; width: 100%; height: 48px; border-top: 1px solid #c4c4c4; color: #b4b4b4; text-align: right; padding-right: 60px; }
    .side button:first-child { padding-right: 63px; }
    .side button:last-child { border-bottom: 1px solid #c4c4c4; height: 49px; }
    table { border-collapse: collapse; table-layout: fixed; width: 100%; }
    th { background: #666; color: #fff; font-weight: normal; text-align: left; height: 23px; padding: 0 0 2px; line-height: 20px; }
    td { height: 24px; padding: 0; line-height: 20px; }
    .grid { font-size: 15px; }
    .grid th + th { border-left: 1px solid #ccc; padding-left: 4px; }
    .grid .filter { height: 25px; }
    .filter input { display: block; width: 100%; height: 23px; border: 1px solid #c8c8c8; border-radius: 3px; background: #fff; padding: 0; font-size: 16px; }
    .grid tbody tr:nth-child(odd) td { background: #fff; }
    .grid tbody tr:nth-child(even) td { background: #f1f1f1; }
    .grid tbody tr.sel td, .list tr.sel td { background: #c5e4fa; }
    .grid td:first-child { padding-left: 18px; }
    .grid td + td { padding-left: 5px; }
    .grid tbody tr.filter td { padding: 0; background: #f1f1f1; }
    .grid tfoot td { height: 23px; background: #d3d4d6; }
    .grid tr.sel td { padding-bottom: 2px; }
    .arrow { margin-left: 10px; vertical-align: middle; }
    .foot { display: flex; padding-top: 14px; }
    .foot button { height: 40px; display: flex; align-items: center; gap: 5px; border-left: 1px solid #c4c4c4; padding: 0 6px 0 8px; text-align: left; font-size: 13px; line-height: 18px; white-space: nowrap; }
    .foot.off { padding-left: 680px; color: #b4b4b4; }
    .num { width: 17px; height: 17px; border-radius: 50%; border: 1px solid #222; background: #c5e4fa; font-size: 12px; line-height: 15px; text-align: center; flex: none; }
    .off .num { border-color: #aaa; background: #ecf6fd; color: #999; }
    .brand { position: absolute; top: 43px; right: 22px; display: flex; gap: 3px; align-items: center; color: #04498a; font: 900 33px/34px Lato, sans-serif; }
    .dialog { position: absolute; left: 375px; top: 99px; width: 740px; height: 526px; border: 1px solid #555; border-radius: 4px; background: #fff; box-shadow: 0 3px 12px rgba(0, 0, 0, 0.4); }
    .dialog h2 { margin: 0 0 14px; height: 20px; width: 440px; background: #004a86; color: #fff; font-size: 16px; line-height: 19px; padding-left: 9px; clip-path: polygon(0 0, 431px 0, 100% 100%, 0 100%); white-space: nowrap; }
    .dialog .panel { margin-left: 4px; height: 433px; }
    .list th + th { padding-left: 4px; }
    .list .r { text-align: right; padding-right: 10px; }
    .list .gap { height: 25px; vertical-align: top; }
    .gap hr { border: 0; border-top: 1px solid #c4c4c4; margin: 13px 0 0; }
    .dialog .foot { padding-left: 489px; }
    .w1 { width: 85px; } .w2 { width: 140px; } .w3 { width: 330px; } .w4 { width: 100px; }
    pdf-reader { position: absolute; left: 985px; right: 77px; top: 85px; bottom: 0; }
    u { text-underline-offset: 2px; }
  `;

  private foot(n: string, a: string, b: string) {
    return html`<button><span class="num">${n}</span><span>${a}<br />${b}</span></button>`;
  }

  render(): TemplateResult {
    return html`
      <div class="tabs">
        <div class="tab"><span>Immissione/revisione quadri</span><button aria-label="Chiudi scheda">${icon(10, 10, "0 0 10 10", svg`<path d="M1 1l8 8M9 1 1 9" stroke="#000" stroke-width="1.600"/>`)}</button></div>
        <button class="plus" aria-label="Nuova scheda">${icon(12, 12, "0 0 12 12", svg`<path d="M6 0v12M0 6h12" stroke="#333" stroke-width="1.600"/>`)}</button>
      </div>
      <nav class="menu">
        <button><u>A</u>zienda</button><button><u>C</u>ontabilita'</button><button><u>M</u>agazzino</button><button><u>S</u>tampe</button>
        <button>A<u>n</u>nuali</button><button>Dichia<u>r</u>ativi</button><button>Servi<u>z</u>i</button><button>Aiuto</button>
      </nav>
      <div class="tools">
        ${toolGroups.map((g) => html`<div>${g.map(([k, t]) => html`<button aria-label=${t}>${icon(16, 16, "0 0 16 16", appIcons[k])}</button>`)}</div>`)}
      </div>
      <div class="crumbs">
        <span class="c1">STD - 10/09/2020</span><span class="c2">AZIENDA DEDICATA ALLO STUDIO</span>
        <span class="c3">Modello RPF Anno 2019 - Generazione delega F24</span><button>Cambio azienda</button>
      </div>
      <div class="brand">
        ${icon(26, 26, "0 0 26 26", svg`<rect width="26" height="26" rx="2" fill="#04498a"/><circle cx="13" cy="13" r="10" stroke="#fff" stroke-width="1.300"/><circle cx="13" cy="13" r="7.500" stroke="#fff" stroke-width="1.500" stroke-dasharray="2.500 1.500"/><path d="M13 5v16M5 13h16M7.500 7.500l11 11M18.500 7.500l-11 11" stroke="#fff" stroke-width="1.300"/><circle cx="13" cy="13" r="2.500" fill="#04498a" stroke="#fff"/>`)}
        <span>PASSCOM</span>
      </div>

      <section class="win">
        <div class="win-head">
          <h2>Periodo 2019 - Pratica ALI/1 - Dichiarante: DELLA VALLE ALESSIA</h2>
          <button class="close" aria-label="Chiudi">${icon(16, 16, "0 0 16 16", svg`<path d="M.5.500l15 15M15.500.500l-15 15" stroke="#777"/>`)}</button>
        </div>
        <div class="cols">
          <div class="panel main">
            <table class="grid">
              <colgroup><col class="w1" /><col /></colgroup>
              <thead><tr><th>Codice <svg class="arrow" width="8" height="5" viewBox="0 0 8 5"><path d="M0 5h8L4 0z" fill="#fff" /></svg></th><th>Quadro</th></tr></thead>
              <tbody>
                <tr class="filter"><td colspan="2"><input aria-label="Filtro codice" value="44" /></td></tr>
                <tr class="sel"><td>44</td><td>Generazione delega F24</td></tr>
                ${repeat(27).map(() => html`<tr><td></td><td></td></tr>`)}
              </tbody>
              <tfoot><tr><td colspan="2"></td></tr></tfoot>
            </table>
          </div>
          <div class="side"><button>a</button><button>li</button><button>n</button><button aria-label="Funzione"></button><button aria-label="Funzione"></button></div>
        </div>
        <div class="foot off">${this.foot("4", "Calcolo", "dichiarazione")}${this.foot("5", "Import", "telematico")}${this.foot("11", "Variazione", "stato quadri")}</div>
      </section>

      <section class="dialog">
        <h2>Selezione prospetti di compensazione e deleghe f24</h2>
        <div class="panel">
          <table class="list">
            <colgroup><col class="w2" /><col class="w3" /><col class="w4" /><col /></colgroup>
            <thead><tr><th>Data/progr</th><th>Descrizione</th><th class="r">Debiti</th><th></th></tr></thead>
            <tbody>
              <tr><td class="gap" colspan="4"><hr /></td></tr>
              ${deleghe.map((r, i) => html`<tr class=${i === 0 ? "sel" : ""}><td>${r[0]}</td><td>${r[1]}</td><td class="r">${r[2]}</td><td></td></tr>`)}
            </tbody>
          </table>
        </div>
        <div class="foot">${this.foot("4", "Nuovo", "Prospetto")}${this.foot("6", "", "")}</div>
      </section>

      <pdf-reader></pdf-reader>
    `;
  }
}
